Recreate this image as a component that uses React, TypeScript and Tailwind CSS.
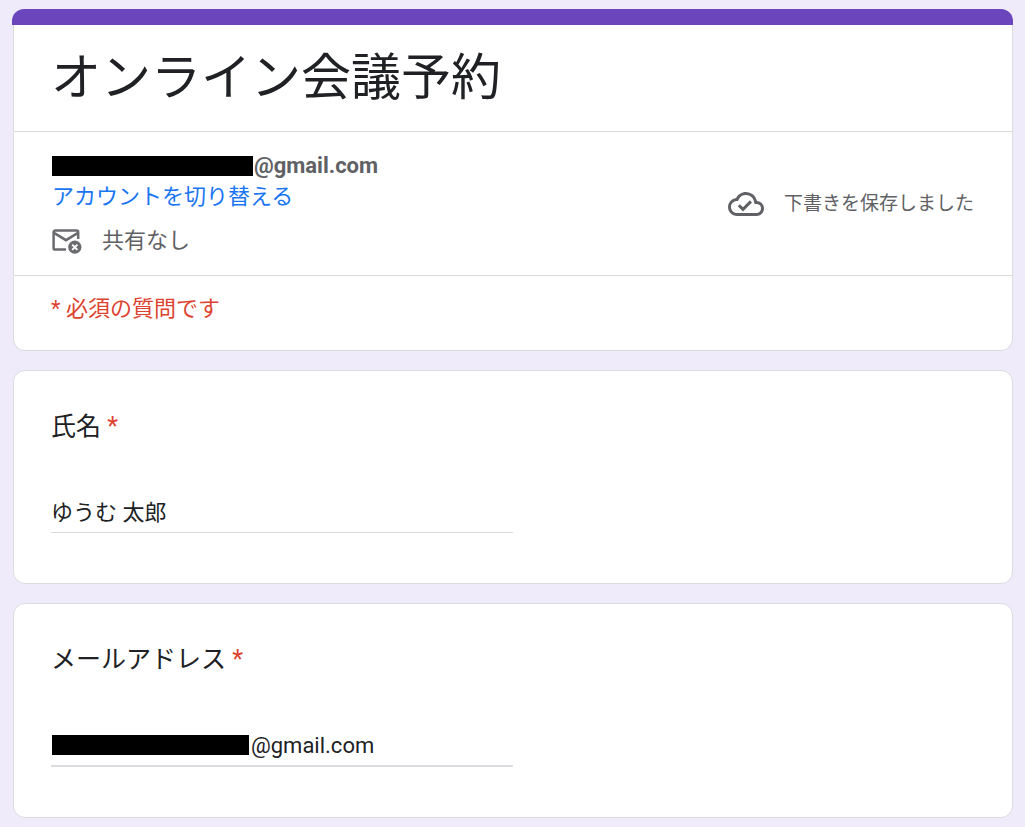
import type { ReactNode } from "react";
import { MdOutlineCloudDone } from "react-icons/md";

function Redacted({ className }: { className: string }) {
  return <span aria-hidden="true" className={`h-5 shrink-0 bg-black ${className}`} />;
}

function MailOffIcon() {
  return (
    <svg viewBox="0 0 30 25" className="h-[25px] w-[30px] shrink-0" fill="none" aria-hidden="true">
      <path
        d="M14 20.5H3.2a1.6 1.6 0 0 1-1.6-1.6V3.2a1.6 1.6 0 0 1 1.6-1.6h21.4a1.6 1.6 0 0 1 1.6 1.6V10"
        stroke="#6b6c70"
        strokeWidth="2.5"
      />
      <path d="M2 3.8l12 7.4 12-7.4" stroke="#6b6c70" strokeWidth="2.6" />
      <circle cx="22.8" cy="18.2" r="6.6" fill="#6b6c70" />
      <path d="M20.2 15.6l5.2 5.2M25.4 15.6l-5.2 5.2" stroke="#fff" strokeWidth="1.9" />
    </svg>
  );
}

function Question({ id, title, children }: { id: string; title: string; children: ReactNode }) {
  return (
    <section className="rounded-xl border border-[#dadce0] bg-white px-[37px] pt-[38px] pb-[50px]">
      <label htmlFor={id} className="block text-[25px] leading-9 text-[#202124]">
        {title} <span className="text-[#dd4430]">*</span>
      </label>
      <div className="mt-[47px]">{children}</div>
    </section>
  );
}

export default function App() {
  return (
    <main className="min-h-screen bg-[#f0ebfa] pt-[9px] pr-3 pb-[9px] pl-[13px] font-[Roboto,'Noto_Sans_CJK_JP',sans-serif]">
      <form className="flex flex-col gap-[19px]">
        <header>
          <div className="-ml-px h-4 rounded-t-xl bg-[#6a45bb]" />
          <div className="rounded-b-xl border border-t-0 border-[#dadce0] bg-white">
            <h1 className="px-[37px] pt-[17px] pb-[17px] text-[50px] leading-[72px] text-[#202124]">
              オンライン会議予約
            </h1>
            <div className="flex items-center justify-between border-y border-[#dadce0] px-[38px] pt-[18px] pb-[18px] text-[22px] text-[#606165]">
              <div>
                <div className="flex h-8 items-center gap-px font-bold leading-8">
                  <Redacted className="w-[201px]" />
                  <span>@gmail.com</span>
                </div>
                <a href="#account" className="block leading-[30px] text-[#1a76f2]">
                  アカウントを切り替える
                </a>
                <div className="mt-[13px] flex items-center gap-5 leading-8">
                  <MailOffIcon />
                  <span>共有なし</span>
                </div>
              </div>
              <div role="status" className="flex items-center gap-5 text-[19px] leading-7">
                <MdOutlineCloudDone className="size-9" />
                <span>下書きを保存しました</span>
              </div>
            </div>
            <p className="px-[37px] pt-[17px] pb-[25px] text-[22px] leading-8 text-[#dd4430]">
              * 必須の質問です
            </p>
          </div>
        </header>

        <Question id="name" title="氏名">
          <input
            id="name"
            type="text"
            required
            defaultValue="ゆうむ 太郎"
            className="block h-[41px] w-1/2 border-b border-[#dadce0] pb-1 text-[22px] text-[#202124] outline-none"
          />
        </Question>

        <Question id="email" title="メールアドレス">
          <div className="flex h-[42px] w-1/2 items-center gap-0.5 border-b-2 border-[#dadce0] pl-px">
            <Redacted className="w-[197px]" />
            <input
              id="email"
              type="text"
              required
              defaultValue="@gmail.com"
              className="h-8 min-w-0 flex-1 text-[22px] text-[#202124] outline-none"
            />
          </div>
        </Question>
      </form>
    </main>
  );
}
